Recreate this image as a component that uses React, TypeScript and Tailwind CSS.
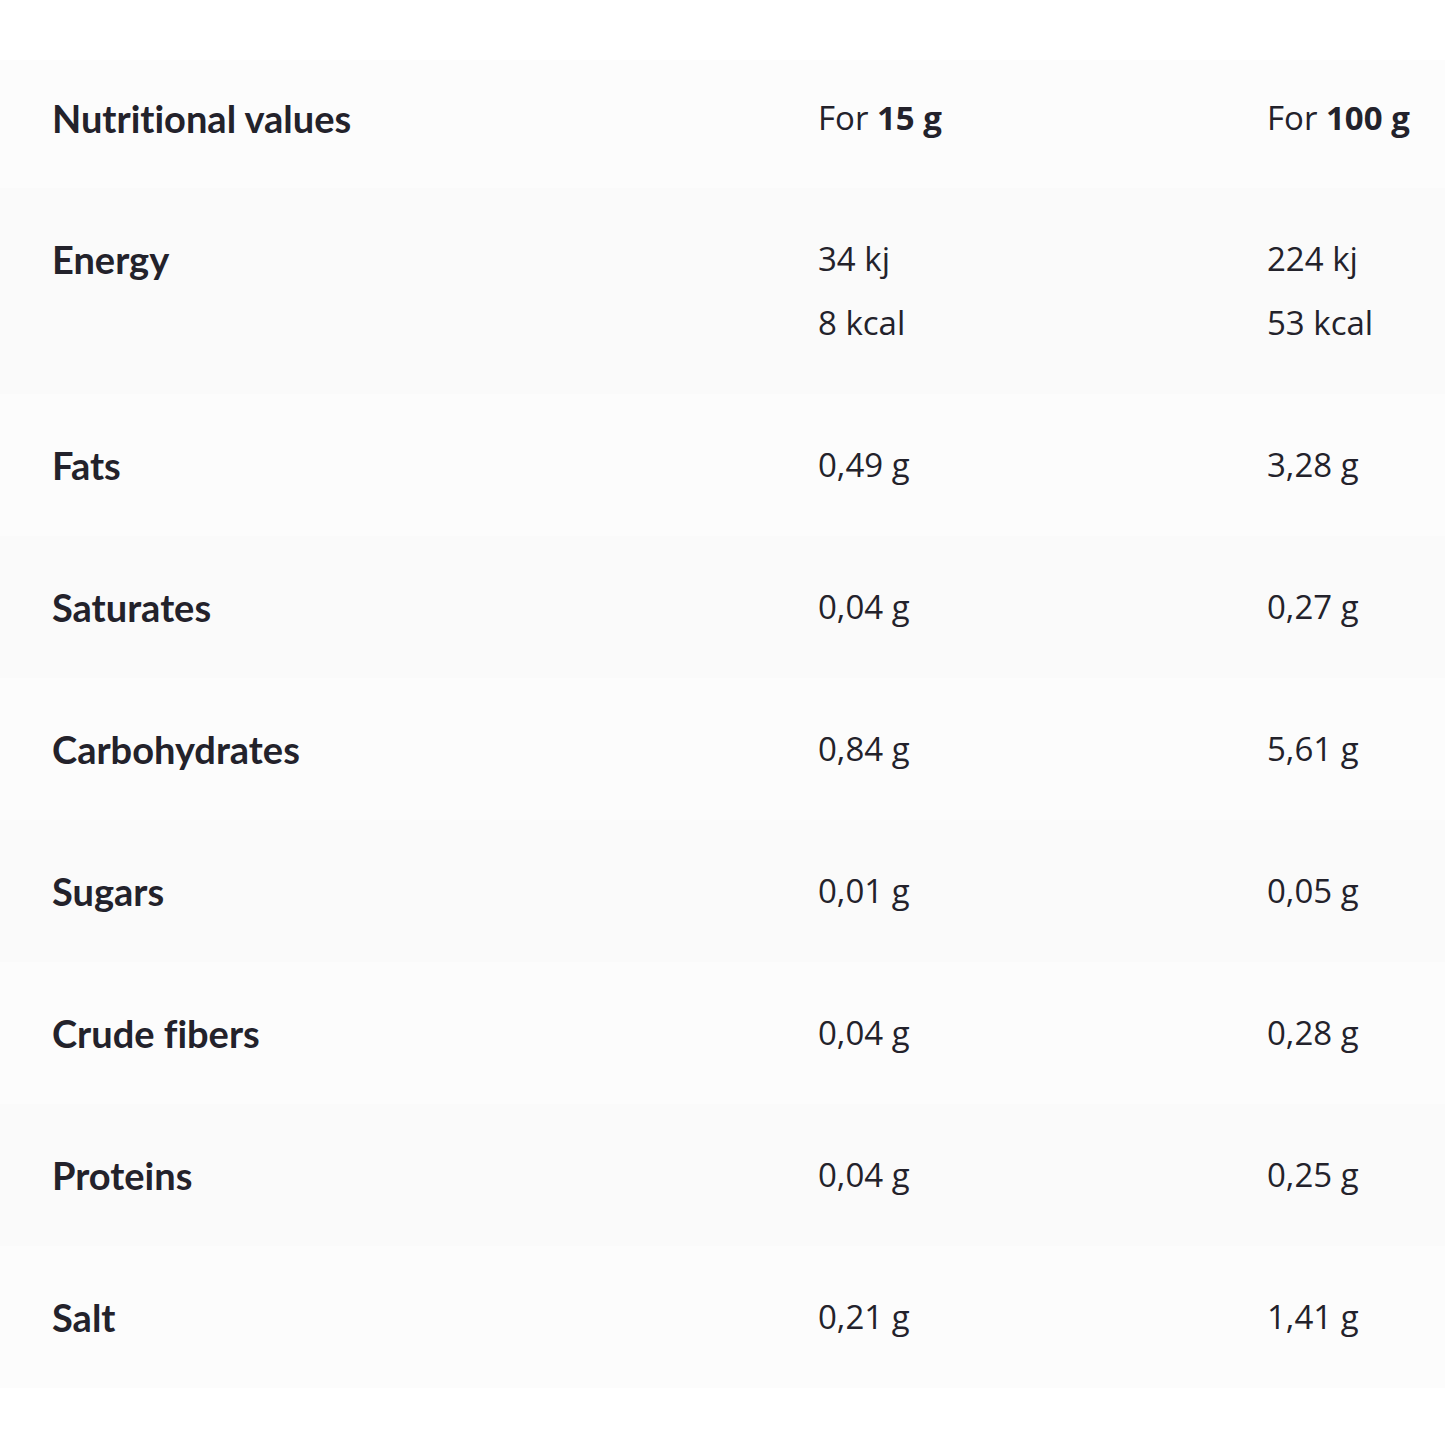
const rows: { label: string; per15: string[]; per100: string[] }[] = [
    { label: "Energy", per15: ["34 kj", "8 kcal"], per100: ["224 kj", "53 kcal"] },
    { label: "Fats", per15: ["0,49 g"], per100: ["3,28 g"] },
    { label: "Saturates", per15: ["0,04 g"], per100: ["0,27 g"] },
    { label: "Carbohydrates", per15: ["0,84 g"], per100: ["5,61 g"] },
    { label: "Sugars", per15: ["0,01 g"], per100: ["0,05 g"] },
    { label: "Crude fibers", per15: ["0,04 g"], per100: ["0,28 g"] },
    { label: "Proteins", per15: ["0,04 g"], per100: ["0,25 g"] },
    { label: "Salt", per15: ["0,21 g"], per100: ["1,41 g"] },
];

const Cell = ({ lines }: { lines: string[] }) => (
    <div className="flex flex-col gap-[22px]">
        {lines.map((l, i) => (
            <p key={i} className="leading-[42px]">
                {l}
            </p>
        ))}
    </div>
);

export default function App() {
    return (
        <div className="w-[1445px] h-[1445px] bg-white pt-[60px] text-[#23222b] font-['Open_Sans',sans-serif] text-[33px] overflow-hidden [font-variant-ligatures:none]">
            <div className="grid grid-cols-[766px_449px_1fr] pl-[52px] bg-[#fcfcfc] pt-[37px] pb-[49px]">
                <p className="leading-[42px] font-['Lato',sans-serif] font-bold text-[38px]">
                    Nutritional values
                </p>
                <p className="leading-[42px]">
                    For <b>15 g</b>
                </p>
                <p className="leading-[42px]">
                    For <b>100 g</b>
                </p>
            </div>
            {rows.map((r, i) => (
                <div
                    key={r.label}
                    className={
                        "grid grid-cols-[766px_449px_1fr] pl-[52px] py-[50px] " +
                        (i % 2 === 0 ? "bg-[#fafafa]" : "bg-[#fcfcfc]")
                    }
                >
                    <p className="leading-[42px] font-['Lato',sans-serif] font-bold text-[38px]">
                        {r.label}
                    </p>
                    <Cell lines={r.per15} />
                    <Cell lines={r.per100} />
                </div>
            ))}
        </div>
    );
}
